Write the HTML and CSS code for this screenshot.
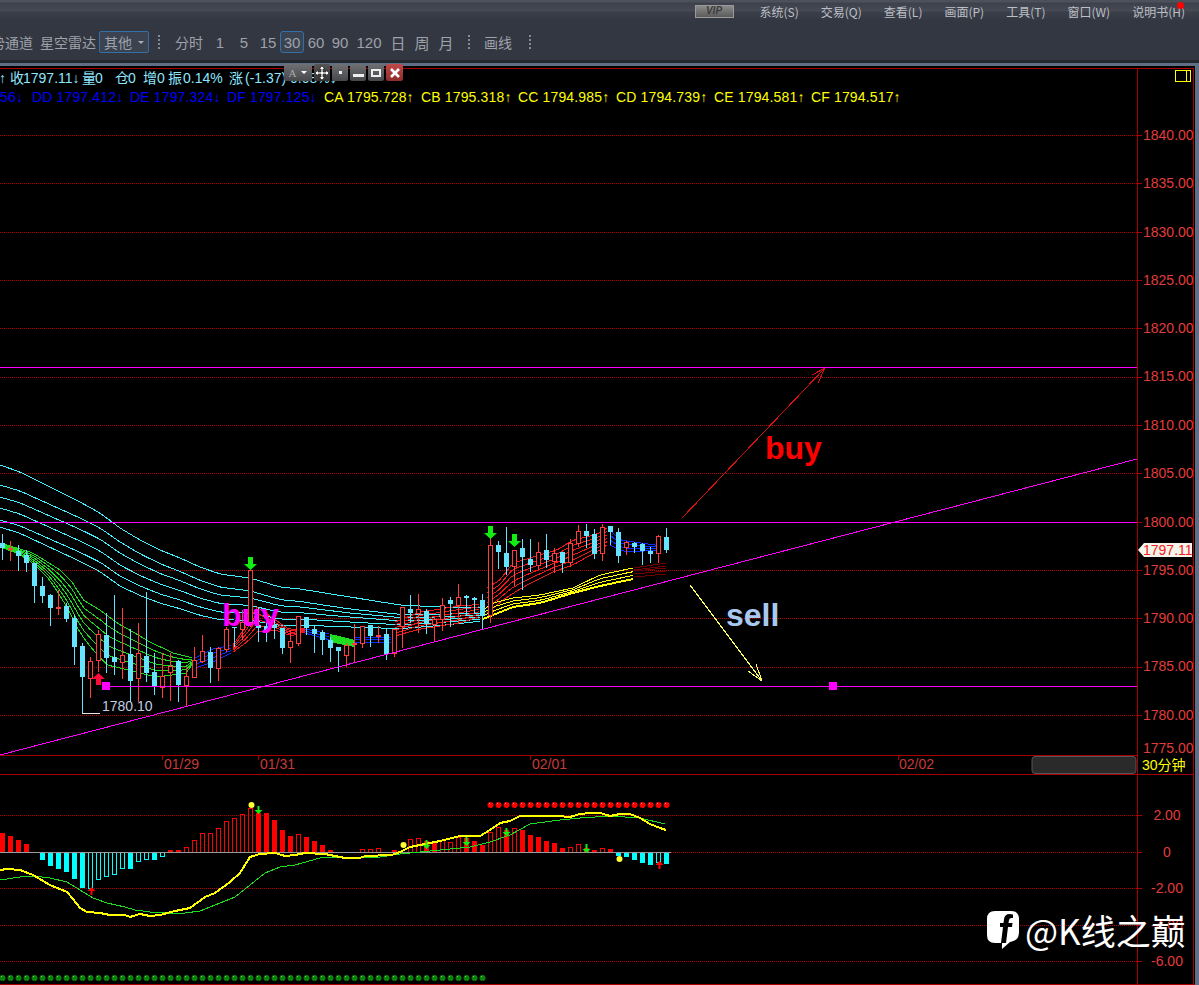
FILE: index.html
```html
<!DOCTYPE html>
<html lang="zh-CN">
<head>
  <meta charset="UTF-8" />
  <title>30分钟 K线</title>
  <link rel="stylesheet" href="styles.css">
</head>
<body>
  <header class="menubar">
    <span class="vip">VIP</span>
    <nav class="menu">
      <span>系统(S)</span>
      <span>交易(Q)</span>
      <span>查看(L)</span>
      <span>画面(P)</span>
      <span>工具(T)</span>
      <span>窗口(W)</span>
      <span class="has-dot">说明书(H)</span>
    </nav>
  </header>

  <div class="toolbar">
    <span class="tool tool-clip">趋势通道</span>
    <span class="tool">星空雷达</span>
    <span class="tool-select">其他<i class="caret"></i></span>
    <span class="sep"></span>
    <span class="tool tool-time">分时</span>
    <span class="period">1</span>
    <span class="period">5</span>
    <span class="period">15</span>
    <span class="period active">30</span>
    <span class="period">60</span>
    <span class="period">90</span>
    <span class="period wide">120</span>
    <span class="period">日</span>
    <span class="period">周</span>
    <span class="period">月</span>
    <span class="sep sep-b"></span>
    <span class="tool tool-draw">画线</span>
    <span class="sep sep-c"></span>
  </div>

  <main class="chart-frame">
    <svg id="chart" class="chart" viewBox="0 64 1195 921" width="1195" height="921">
      <g id="grid"></g>
      <g id="lines"></g>
      <g id="candles"></g>
      <g id="macd"></g>
      <g id="marks"></g>

      <text class="head head-cyan" y="83"><tspan x="-1">↑</tspan><tspan x="10">收</tspan><tspan x="23">1797.11↓</tspan><tspan x="82">量</tspan><tspan x="95">0</tspan><tspan x="115">仓</tspan><tspan x="128">0</tspan><tspan x="143">增</tspan><tspan x="157">0</tspan><tspan x="168">振</tspan><tspan x="183">0.14%</tspan><tspan x="229">涨</tspan><tspan x="245">(-1.37)</tspan><tspan x="290">0.08%↓</tspan></text>
      <text class="head head-blue" y="102"><tspan x="-4">.56↓</tspan><tspan x="32">DD 1797.412↓</tspan><tspan x="130">DE 1797.324↓</tspan><tspan x="227">DF 1797.125↓</tspan></text>
      <text class="head head-yellow" y="102"><tspan x="324">CA 1795.728↑</tspan><tspan x="421">CB 1795.318↑</tspan><tspan x="518">CC 1794.985↑</tspan><tspan x="616">CD 1794.739↑</tspan><tspan x="714">CE 1794.581↑</tspan><tspan x="811">CF 1794.517↑</tspan></text>

      <text class="low-label" x="102" y="711">1780.10</text>
      <text class="big buy-m" x="222" y="626">buy</text>
      <text class="big buy-r" x="765" y="459">buy</text>
      <text class="big sell" x="726" y="626">sell</text>

      <rect class="mini-box" x="1175.5" y="70.5" width="15" height="11" />
      <line class="mini-box" x1="1186.5" y1="70" x2="1186.5" y2="82" />

      <g id="axis"></g>
      <text class="date" x="164" y="769">01/29</text>
      <text class="date" x="260" y="769">01/31</text>
      <text class="date" x="532" y="769">02/01</text>
      <text class="date" x="899" y="769">02/02</text>
      <rect class="scroll-thumb" x="1032" y="756.5" width="104" height="17" rx="3" />
      <text class="period-label" x="1142" y="770">30分钟</text>

      <polygon class="price-tag" points="1138,550 1144,543 1192,543 1192,557 1144,557" />
      <text class="price-tag-text" x="1143" y="555">1797.11</text>
    </svg>

    <div class="float-tools">
      <span class="ft ft-font">A<i class="caret caret-w"></i></span>
      <span class="ft ft-move">
        <svg viewBox="0 0 16 16" width="16" height="16"><path d="M8 1 11 4H9V7H12V5L15 8 12 11V9H9V12H11L8 15 5 12H7V9H4V11L1 8 4 5V7H7V4H5Z" fill="#fff" stroke="#222" stroke-width=".7"/></svg>
      </span>
      <span class="ft"><i class="dot"></i></span>
      <span class="ft"><i class="min"></i></span>
      <span class="ft"><i class="restore"></i></span>
      <span class="ft ft-close">
        <svg viewBox="0 0 12 12" width="12" height="12"><path d="M2 2 10 10M10 2 2 10" stroke="#fff" stroke-width="2.6"/></svg>
      </span>
    </div>

    <div class="watermark">
      <svg class="wm-icon" viewBox="0 0 34 40" width="34" height="40">
        <path d="M9 1H25Q33 1 33 9V22Q33 31 24 32L16 39V33H9Q1 33 1 25V9Q1 1 9 1Z" fill="#fff"/>
        <path d="M20 33 22 17H26L26.500 13H22.500L23 10Q23.300 8 25.500 8H27V4.500Q25 4 23.500 4 18.500 4 18 9.500L17.500 13H14V17H17L15 33Z" fill="#000"/>
      </svg>
      <span>@K线之巅</span>
    </div>
  </main>

  <script src="chart.js"></script>
</body>
</html>
```

FILE: styles.css
```css
:root {
  --bar-bg: #333741;
  --bar-text: #9ea2aa;
  --frame: #5f6d85;
  --axis-red: #a80000;
  --label-red: #e23c3c;
}

html, body {
  margin: 0;
  padding: 0;
  height: 985px;
  overflow: hidden;
  background-color: var(--bar-bg);
  font-family: "Liberation Sans", "Noto Sans CJK SC", sans-serif;
}

.menubar {
  display: flex;
  align-items: center;
  justify-content: flex-end;
  height: 21px;
  padding-right: 14px;
  box-sizing: border-box;
  background: linear-gradient(#4c515c 0, #4c515c 2px, #3d414c 3px, #464a55 11px, #3b3f49 12px, var(--bar-bg) 21px);
}

.vip {
  display: flex;
  align-items: center;
  justify-content: center;
  width: 37px;
  height: 11px;
  margin-right: 26px;
  margin-top: 1px;
  border: 1px solid #9a9a9a;
  background: linear-gradient(#8a8a8a, #5c5c5c);
  color: #3c3c3c;
  font-size: 10px;
  font-weight: bold;
  font-style: italic;
  line-height: 1;
}

.menu {
  display: flex;
  gap: 22px;
  padding-top: 2px;
  font-family: "Noto Sans CJK SC", sans-serif;
  font-size: 12px;
  color: #bcbfc5;
}

.has-dot {
  position: relative;
}

.has-dot::after {
  content: "";
  position: absolute;
  top: -1px;
  right: 1px;
  width: 7px;
  height: 7px;
  border-radius: 50%;
  background-color: #f00;
}

.toolbar {
  display: flex;
  align-items: center;
  height: 39px;
  padding-top: 3px;
  box-sizing: border-box;
  overflow: hidden;
  font-family: "Noto Sans CJK SC", sans-serif;
  font-size: 14px;
  color: var(--bar-text);
}

.tool {
  white-space: nowrap;
}

.tool-clip {
  margin-left: -23px;
  margin-right: 7px;
}

.tool-select {
  display: flex;
  align-items: center;
  box-sizing: border-box;
  width: 50px;
  height: 22px;
  margin-left: 3px;
  padding-left: 4px;
  border: 1px solid #3470a8;
  border-radius: 2px;
  background-color: #3b4350;
}

.caret {
  width: 0;
  height: 0;
  margin-left: 6px;
  border-left: 3px solid transparent;
  border-right: 3px solid transparent;
  border-top: 3px solid #a9adb5;
}

.sep {
  width: 2px;
  height: 14px;
  margin-left: 9px;
  background-image: linear-gradient(#868a92 50%, transparent 50%);
  background-size: 2px 4px;
}

.tool-time {
  margin-left: 15px;
  margin-right: 5px;
}

.period {
  display: flex;
  align-items: center;
  justify-content: center;
  box-sizing: border-box;
  width: 24px;
  height: 22px;
  font-family: "Liberation Sans", "Noto Sans CJK SC", sans-serif;
  font-size: 15px;
}

.period.wide {
  width: 34px;
}

.period.active {
  border: 1px solid #3470a8;
  border-radius: 3px;
  background-color: #3b4350;
}

.sep-b {
  margin-left: 10px;
}

.tool-draw {
  margin-left: 14px;
}

.sep-c {
  margin-left: 17px;
}

.chart-frame {
  position: relative;
  height: 925px;
  box-sizing: border-box;
  padding-top: 4px;
  border-top: 3px solid #24272c;
  margin-top: 0;
  background: linear-gradient(var(--frame) 0, var(--frame) 3px, #000 3px);
}

.chart {
  display: block;
  position: absolute;
  left: 0;
  top: 1px;
  background-color: #000;
  clip-path: inset(3px 0 0 0);
}

.chart-frame::after {
  content: "";
  position: absolute;
  top: 0;
  right: 0;
  width: 4px;
  height: 100%;
  background-color: var(--frame);
}

.grid-dot {
  stroke: #b80000;
  stroke-width: 1;
  stroke-dasharray: 1 1;
  shape-rendering: crispEdges;
}

.grid-solid {
  stroke: var(--axis-red);
  stroke-width: 1;
  shape-rendering: crispEdges;
}

.ma {
  fill: none;
  stroke-width: 1;
  shape-rendering: crispEdges;
}

.ma-thick {
  fill: none;
  stroke-width: 2;
  shape-rendering: crispEdges;
}

.mag {
  fill: none;
  stroke: #f0f;
  stroke-width: 1;
  shape-rendering: crispEdges;
}

.head {
  font-size: 14px;
}

.head-cyan {
  fill: #8fe6ff;
}

.head-blue {
  fill: #0000ff;
  letter-spacing: 0.15px;
}

.head-yellow {
  fill: #ffff00;
  letter-spacing: 0.15px;
}

.low-label {
  font-size: 14px;
  fill: #c0cee0;
}

.big {
  font-size: 32px;
  font-weight: bold;
}

.buy-m {
  fill: #f0f;
}

.buy-r {
  fill: #f00;
}

.sell {
  fill: #a8c8f0;
}

.mini-box {
  fill: none;
  stroke: #ff0;
  stroke-width: 1;
  shape-rendering: crispEdges;
}

.axis-text {
  font-size: 14px;
  fill: var(--label-red);
}

.date {
  font-size: 14px;
  fill: #c83a3a;
}

.scroll-thumb {
  fill: #2a2a2a;
  stroke: #555;
}

.period-label {
  font-size: 14px;
  fill: #ff0;
}

.price-tag {
  fill: #f4f4ea;
}

.price-tag-text {
  font-size: 14px;
  fill: #f02020;
}

.float-tools {
  position: absolute;
  left: 284px;
  top: 1px;
  display: flex;
  gap: 2px;
  height: 17px;
}

.ft {
  display: flex;
  align-items: center;
  justify-content: center;
  width: 16px;
  height: 17px;
  background: linear-gradient(#6e7074, #46484c);
  border-radius: 2px;
}

.ft-font {
  width: 28px;
  font-family: "Liberation Serif", serif;
  font-size: 11px;
  color: #aaa;
}

.caret-w {
  border-top-color: #fff;
  margin-left: 5px;
}

.ft-move {
  background: linear-gradient(#555, #333);
}

.ft-close {
  width: 17px;
  background: linear-gradient(#c04848, #8e2c2c);
}

.dot {
  width: 3px;
  height: 3px;
  background-color: #eee;
}

.min {
  width: 11px;
  height: 3px;
  margin-top: 5px;
  background-color: #eee;
}

.restore {
  box-sizing: border-box;
  width: 10px;
  height: 8px;
  border: 2px solid #eee;
}

.watermark {
  position: absolute;
  left: 986px;
  top: 847px;
  display: flex;
  align-items: center;
  gap: 5px;
  font-family: "Noto Sans CJK SC", sans-serif;
  font-size: 35px;
  line-height: 40px;
  color: #fff;
  white-space: nowrap;
}
```

FILE: chart.js
```js
const NS = "http://www.w3.org/2000/svg";

function add(parent, tag, attrs, text) {
  const el = document.createElementNS(NS, tag);
  for (const k in attrs) el.setAttribute(k, attrs[k]);
  if (text !== undefined) el.textContent = text;
  parent.appendChild(el);
  return el;
}

// y value of a polyline at x
function at(pts, x) {
  if (x <= pts[0][0]) return pts[0][1];
  for (let i = 1; i < pts.length; i++) {
    if (x <= pts[i][0]) {
      const [x0, y0] = pts[i - 1];
      const [x1, y1] = pts[i];
      return y0 + (y1 - y0) * (x - x0) / (x1 - x0);
    }
  }
  return pts[pts.length - 1][1];
}

const grid = document.getElementById("grid");
const lines = document.getElementById("lines");
const candles = document.getElementById("candles");
const macd = document.getElementById("macd");
const marks = document.getElementById("marks");
const axis = document.getElementById("axis");

// frame
function solid(x1, y1, x2, y2) {
  add(grid, "line", { class: "grid-solid", x1, y1, x2, y2 });
}
solid(0, 68.5, 1193, 68.5);
solid(1137.5, 68, 1137.5, 985);
solid(1193.5, 68, 1193.5, 985);
solid(0, 755.5, 1137, 755.5);
solid(0, 774.5, 1193, 774.5);
solid(0, 984.5, 1195, 984.5);

// price grid: label, text centre, grid row
const prices = [
  ["1840.00", 135, 135], ["1835.00", 183, 183], ["1830.00", 232, 232], ["1825.00", 280, 280], ["1820.00", 328, 328],
  ["1815.00", 376, 377], ["1810.00", 425, 425], ["1805.00", 473, 473], ["1800.00", 522, 522], ["1795.00", 570, 570],
  ["1790.00", 618, 618], ["1785.00", 666, 667], ["1780.00", 715, 715],
];
prices.forEach(([label, y, row]) => {
  add(grid, "line", { class: "grid-dot", x1: 0, y1: row + 0.5, x2: 1137, y2: row + 0.5 });
  add(axis, "line", { class: "grid-solid", x1: 1137, y1: row + 0.5, x2: 1142, y2: row + 0.5 });
  add(axis, "text", { class: "axis-text", x: 1143, y: y + 5 }, label);
});
add(axis, "text", { class: "axis-text", x: 1143, y: 753 }, "1775.00");

// macd grid
[["2.00", 815], ["0", 852], ["-2.00", 888], ["-4.00", 925], ["-6.00", 961]].forEach(([label, y]) => {
  add(grid, "line", { class: "grid-dot", x1: y === 852 ? 671 : 0, y1: y + 0.5, x2: 1137, y2: y + 0.5 });
  add(axis, "line", { class: "grid-solid", x1: 1137, y1: y + 0.5, x2: 1142, y2: y + 0.5 });
  add(axis, "text", { class: "axis-text", x: 1167, y: y + 5, "text-anchor": "middle" }, label);
});

// date ticks
[162, 258, 530, 898].forEach(x => solid(x + 0.5, 755, x + 0.5, 760));

// moving averages
function ma(pts, color, cls) {
  add(lines, "polyline", {
    class: cls || "ma",
    stroke: color,
    points: pts.map(p => p[0] + "," + p[1].toFixed(1)).join(" "),
  });
}

function sample(x0, x1, fn) {
  const out = [];
  for (let x = x0; x <= x1; x += 6) out.push([x, fn(x)]);
  return out;
}

function bundle(top, bot, n, color, cls) {
  const x0 = Math.min(top[0][0], bot[0][0]);
  const x1 = Math.max(top[top.length - 1][0], bot[bot.length - 1][0]);
  for (let i = 0; i < n; i++) {
    const t = i / (n - 1);
    ma(sample(x0, x1, x => at(top, x) + (at(bot, x) - at(top, x)) * t), color, cls);
  }
}

// long cyan ribbon
const AQUA = "#3ff0ff";
const cyanTop = [[0, 465], [20, 472], [40, 482], [60, 492], [80, 502], [100, 513], [120, 528], [140, 540], [160, 550], [180, 558], [200, 567], [220, 574], [250, 578], [280, 587], [300, 589], [350, 597], [400, 605], [440, 607], [483, 608]];
const gaps = [
  [[0, 20], [120, 14], [350, 12], [483, 5]],
  [[0, 32], [120, 25], [350, 16], [483, 7]],
  [[0, 43], [120, 37], [350, 20], [483, 9]],
  [[0, 55], [120, 48], [350, 25], [483, 11]],
  [[0, 62], [120, 58], [350, 30], [483, 13]],
];
ma(sample(0, 483, x => at(cyanTop, x)), AQUA);
gaps.forEach(g => ma(sample(0, 483, x => at(cyanTop, x) + at(g, x)), AQUA));

// short ribbon, colour follows the trend
bundle(
  [[0, 543], [33, 553], [60, 570], [73, 583], [83, 600], [100, 610], [117, 623], [133, 632], [150, 642], [173, 653], [193, 658]],
  [[0, 547], [17, 553], [33, 563], [50, 580], [67, 607], [80, 633], [93, 650], [107, 665], [120, 668], [140, 673], [157, 677], [187, 673], [193, 663]],
  6, "#1edc1e");
bundle([[195, 658], [213, 649], [233, 645]], [[195, 668], [213, 662], [233, 652]], 4, "#0a2cff");
bundle([[233, 645], [247, 625], [257, 607], [277, 621], [290, 630], [305, 628]], [[233, 652], [247, 642], [257, 632], [277, 630], [290, 636], [305, 632]], 5, "#f01818");
bundle([[305, 629], [330, 634]], [[305, 633], [330, 640]], 3, "#0a2cff");
bundle([[330, 635], [355, 641]], [[330, 641], [355, 646]], 4, "#1edc1e", "ma-thick");
bundle([[355, 638], [395, 637]], [[355, 642], [395, 642]], 3, "#0a2cff");
bundle([[395, 622], [420, 612], [460, 606], [484, 604]], [[395, 636], [420, 629], [460, 623], [484, 615]], 6, "#f01818");
bundle(
  [[487, 588], [500, 580], [513, 563], [527, 559], [540, 555], [557, 550], [573, 540], [587, 537], [600, 533], [607, 528]],
  [[487, 613], [507, 597], [527, 585], [553, 572], [573, 565], [587, 557], [600, 550], [607, 545]],
  6, "#f01818");
bundle([[610, 530], [620, 540], [662, 546]], [[610, 545], [625, 552], [662, 550]], 4, "#0a2cff");

// yellow ribbon, then the unfinished dark red part
const yellowTop = [[483, 610], [493, 603], [513, 598], [540, 595], [573, 588], [600, 575], [633, 568]];
const yellowBot = [[483, 619], [513, 607], [540, 603], [573, 593], [600, 586], [633, 579]];
bundle(yellowTop, yellowBot, 4, "#ffff00");
ma(sample(483, 633, x => at(yellowBot, x)), "#ffff00", "ma-thick");
[[568, 563], [570, 566], [571, 568], [574, 571], [577, 574]].forEach(([a, b]) => {
  ma([[634, a], [666, b]], "#700000");
});

// candles: high, top, bottom, low, kind. x starts at 2 and steps by 8
const data = [
  [534, 543, 548, 560, "c"], [541, 548, 549, 561, "r"], [545, 551, 556, 571, "c"], [550, 555, 563, 572, "c"],
  [563, 563, 586, 603, "c"], [577, 586, 596, 603, "c"], [594, 595, 608, 626, "c"], [590, 607, 608, 615, "r"],
  [603, 606, 619, 622, "c"], [615, 618, 647, 665, "c"], [643, 646, 677, 713, "c"], [657, 661, 678, 698, "r"],
  [630, 634, 660, 672, "r"], [613, 635, 658, 673, "c"], [595, 657, 662, 675, "c"], [608, 655, 662, 679, "r"],
  [629, 654, 681, 702, "c"], [623, 653, 678, 702, "r"], [592, 656, 673, 682, "c"], [653, 672, 686, 695, "c"],
  [653, 676, 687, 698, "r"], [653, 666, 672, 701, "r"], [660, 661, 685, 702, "c"], [668, 676, 685, 706, "r"],
  [647, 660, 677, 677, "r"], [635, 651, 661, 663, "r"], [647, 652, 668, 683, "c"], [647, 648, 668, 681, "r"],
  [627, 629, 649, 652, "r"], [627, 627, 628, 647, "c"], [610, 622, 629, 640, "r"], [570, 570, 622, 627, "r"],
  [607, 625, 628, 642, "c"], [623, 626, 632, 642, "c"], [613, 625, 628, 639, "c"], [628, 628, 648, 654, "c"],
  [630, 641, 647, 663, "r"], [616, 616, 643, 646, "r"], [617, 617, 628, 635, "c"], [625, 629, 634, 653, "c"],
  [630, 632, 640, 655, "c"], [637, 640, 648, 662, "c"], [647, 647, 651, 672, "c"], [643, 645, 655, 667, "r"],
  [624, 643, 644, 662, "r"], [626, 626, 643, 648, "r"], [625, 625, 636, 647, "c"], [626, 635, 636, 643, "r"],
  [628, 634, 654, 660, "c"], [629, 629, 653, 657, "r"], [607, 607, 626, 648, "r"], [595, 609, 613, 623, "c"],
  [594, 609, 613, 633, "r"], [609, 611, 624, 634, "c"], [617, 619, 624, 642, "r"], [598, 605, 619, 631, "r"],
  [597, 600, 604, 627, "c"], [584, 597, 605, 624, "r"], [595, 596, 598, 616, "c"], [597, 598, 600, 613, "c"],
  [594, 600, 616, 629, "c"], [538, 545, 615, 623, "r"], [541, 545, 552, 569, "c"], [527, 553, 567, 575, "c"],
  [550, 550, 566, 586, "r"], [539, 548, 557, 590, "c"], [539, 559, 565, 572, "c"], [542, 552, 565, 570, "r"],
  [534, 550, 560, 568, "c"], [548, 553, 561, 573, "r"], [552, 552, 563, 573, "c"], [539, 543, 562, 567, "r"],
  [525, 531, 543, 547, "r"], [524, 531, 536, 548, "c"], [529, 534, 554, 559, "c"], [524, 527, 553, 561, "r"],
  [526, 526, 532, 545, "c"], [528, 532, 556, 563, "c"], [541, 542, 547, 555, "r"], [542, 543, 547, 553, "c"],
  [543, 544, 551, 565, "c"], [547, 551, 554, 563, "c"], [535, 536, 553, 563, "r"], [528, 537, 550, 553, "c"],
];
const RED = "#ff3d3d";
const CYAN = "#66e4ff";
data.forEach((c, i) => {
  const x = 2 + i * 8;
  const [hi, top, bot, lo, kind] = c;
  const color = kind === "r" ? RED : CYAN;
  add(candles, "rect", { x, y: hi, width: 1, height: lo - hi, fill: color, "shape-rendering": "crispEdges" });
  if (kind === "r") {
    add(candles, "rect", { x: x - 1.5, y: top + 0.5, width: 4, height: Math.max(bot - top, 1), fill: "#000", stroke: RED, "shape-rendering": "crispEdges" });
  } else {
    add(candles, "rect", { x: x - 2, y: top, width: 5, height: Math.max(bot - top, 1), fill: CYAN, "shape-rendering": "crispEdges" });
  }
});

// macd histogram: y of the bar end, negative means hollow, 0 no bar
const bars = [
  833, 836, 840, 844, 0, 860, 866, 869, 872, 879, 888, -888, -879, -876, -874, -868, 869, -861, -859, 860, -856,
  850, 850, -847, -840, -833, -833, -828, -821, -818, -814, -808, 813, 813, 820, 830, 836, -834, 837, 841, 845, 850,
  853, 853, 853, -849, -849, -848, 0, 850, 0, -839, -838, 841, 843, -840, -842, -837, 838, 841, 845, -832, -827,
  830, -828, 830, 835, 837, 841, 843, 848, -847, -844, 848, 850, -848, 849, 856, 857, 860, 863, 865, -862, 864,
];
bars.forEach((b, i) => {
  if (!b) return;
  const x = 2 + i * 8;
  const end = Math.abs(b);
  const color = end < 852 ? "#ff0000" : "#00ffff";
  const y = Math.min(end, 852);
  const h = Math.abs(end - 852);
  if (b > 0) {
    add(macd, "rect", { x: x - 2, y, width: 5, height: h, fill: color, "shape-rendering": "crispEdges" });
  } else {
    add(macd, "rect", { x: x - 1.5, y: y + 0.5, width: 4, height: h, fill: "none", stroke: color, "shape-rendering": "crispEdges" });
  }
});
add(macd, "rect", { x: 0, y: 852, width: 671, height: 1, fill: "#9a9a9a", "shape-rendering": "crispEdges" });

const dif = [[0, 870], [7, 869], [20, 870], [33, 875], [50, 885], [67, 892], [73, 899], [80, 908], [87, 912], [100, 913], [110, 915], [125, 915], [130, 917], [140, 914], [150, 916], [160, 915], [175, 911], [190, 908], [205, 897], [215, 893], [230, 882], [240, 873], [250, 857], [260, 854], [275, 853], [285, 856], [295, 855], [305, 853], [325, 854], [345, 858], [360, 858], [365, 856], [392, 855], [400, 852], [410, 847], [420, 845], [440, 841], [460, 836], [480, 836], [490, 830], [500, 823], [510, 821], [520, 816], [558, 816], [570, 817], [580, 814], [590, 813], [600, 813], [610, 816], [620, 814], [630, 814], [640, 818], [650, 824], [660, 828], [666, 830]];
const dea = [[0, 880], [20, 877], [33, 876], [50, 878], [67, 882], [80, 890], [93, 898], [107, 903], [125, 907], [135, 910], [150, 912], [165, 913], [185, 913], [200, 911], [215, 905], [235, 897], [250, 885], [265, 873], [280, 867], [295, 865], [320, 858], [345, 857], [380, 857], [400, 854], [430, 851], [470, 847], [490, 842], [510, 835], [530, 824], [560, 820], [580, 818], [610, 816], [640, 818], [665, 824]];
add(macd, "polyline", { points: dea.join(" "), fill: "none", stroke: "#1edc1e", "shape-rendering": "crispEdges" });
add(macd, "polyline", { points: dif.join(" "), fill: "none", stroke: "#ffff00", "stroke-width": 2, "shape-rendering": "crispEdges" });

// dots
function dot(x, y, r, fill, spot) {
  add(macd, "circle", { cx: x + 0.5, cy: y, r, fill });
  if (spot) add(macd, "rect", { x: x - 1, y: y - 2, width: 1, height: 1, fill: spot });
}
for (let x = 2; x <= 482; x += 8) dot(x, 978, 3, "#0a860a", "#79c779");
for (let x = 490; x <= 666; x += 8) dot(x, 805, 3, "#ff0000", "#ff9a9a");
[[251, 805], [403, 845], [619, 859]].forEach(([x, y]) => dot(x, y, 3, "#ffff33"));

// signal arrows
function arrow(x, top, bottom, halfW, shaft, headH, color, up) {
  const neck = up ? top + headH : bottom - headH;
  const pts = up
    ? [[x, top], [x + halfW, neck], [x + shaft, neck], [x + shaft, bottom], [x - shaft, bottom], [x - shaft, neck], [x - halfW, neck]]
    : [[x, bottom], [x + halfW, neck], [x + shaft, neck], [x + shaft, top], [x - shaft, top], [x - shaft, neck], [x - halfW, neck]];
  add(marks, "polygon", { points: pts.join(" "), fill: color });
}
arrow(250.5, 557, 570, 6.5, 2.5, 6, "#12ee12");
arrow(490.5, 526, 539, 6.5, 2.5, 6, "#12ee12");
arrow(514.5, 534, 547, 6.5, 2.5, 6, "#12ee12");
arrow(98.5, 673, 685, 6.5, 2.5, 6, "#ff0a3c", true);
[[258.5, 806, 814], [426.5, 840, 849], [466.5, 837, 846], [506.5, 828, 836], [586.5, 844, 853]].forEach(([x, t, b]) => {
  arrow(x, t, b, 4, 1, 4, "#12ee12");
});
arrow(91.5, 887, 895, 4, 1, 4, "#ff0000", true);
arrow(659.5, 861, 869, 4, 1, 4, "#ff0000", true);

// drawn lines
function mag(x1, y1, x2, y2) {
  add(marks, "line", { class: "mag", x1, y1, x2, y2 });
}
mag(0, 755, 1137, 459);
mag(0, 522.5, 1137, 522.5);
mag(106, 686.5, 1137, 686.5);
mag(0, 367.5, 1137, 367.5);
add(marks, "rect", { x: 102, y: 682, width: 8, height: 8, fill: "#f0f" });
add(marks, "rect", { x: 829, y: 682, width: 8, height: 8, fill: "#f0f" });
add(marks, "line", { x1: 82, y1: 713.5, x2: 100, y2: 713.5, stroke: "#e8e8e8", "shape-rendering": "crispEdges" });

function ray(color, segs) {
  segs.forEach(s => add(marks, "line", { x1: s[0], y1: s[1], x2: s[2], y2: s[3], stroke: color, "shape-rendering": "crispEdges" }));
}
ray("#d81010", [[682, 518, 825, 368], [825, 368, 812, 375], [825, 368, 818, 383]]);
ray("#ffff66", [[690, 585, 762, 681], [762, 681, 748, 671], [762, 681, 756, 664]]);
```
